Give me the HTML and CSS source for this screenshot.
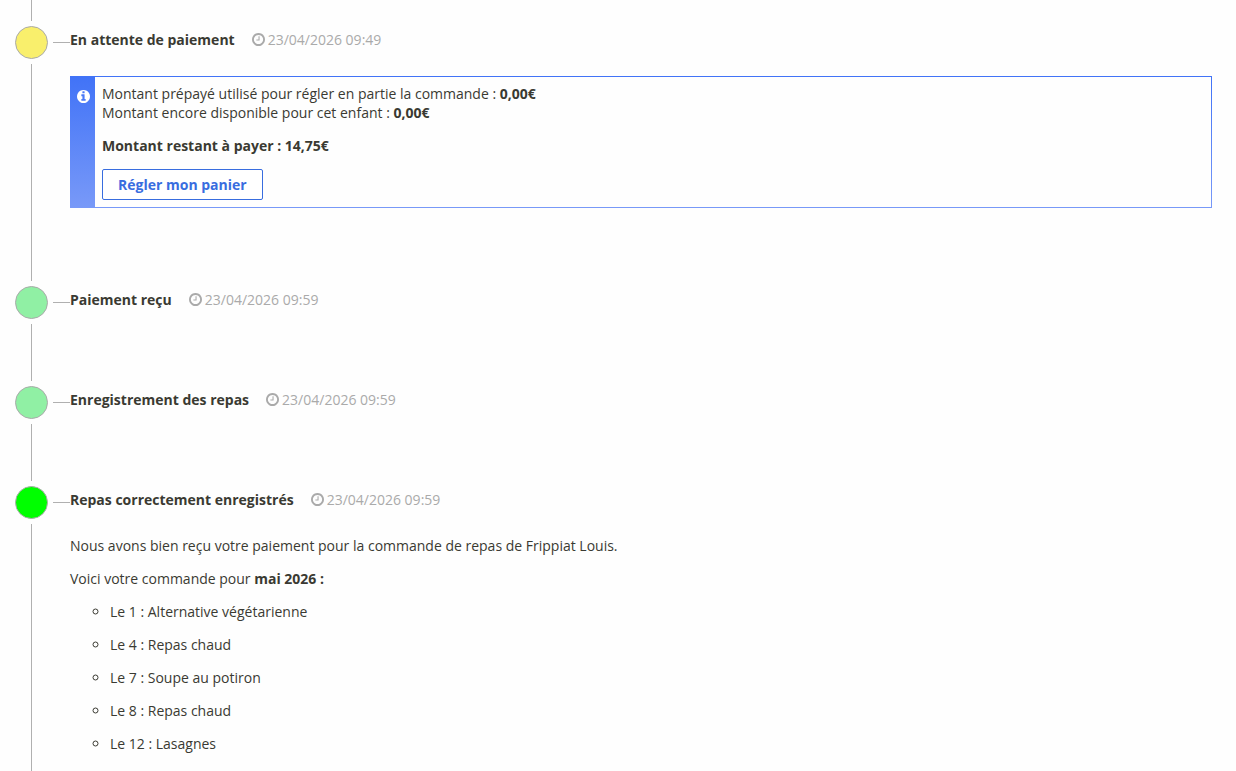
FILE: index.html
```html
<!DOCTYPE html>
<html lang="fr">
<head>
    <meta charset="UTF-8">
    <meta name="viewport" content="width=device-width, initial-scale=1.0">
    <title>Suivi de la commande</title>
    <link rel="stylesheet" href="styles.css">
</head>
<body>
    <svg class="sprite" aria-hidden="true">
        <symbol id="clock" viewBox="0 128 1536 1536">
            <path d="M896 544v448q0 14-9 23t-23 9h-320q-14 0-23-9t-9-23v-64q0-14 9-23t23-9h224v-352q0-14 9-23t23-9h64q14 0 23 9t9 23zm416 352q0-148-73-273t-198-198-273-73-273 73-198 198-73 273 73 273 198 198 273 73 273-73 198-198 73-273zm224 0q0 209-103 385.5t-279.5 279.5-385.5 103-385.5-103-279.5-279.5-103-385.5 103-385.5 279.5-279.5 385.5-103 385.5 103 279.5 279.5 103 385.5z"/>
        </symbol>
        <symbol id="info" viewBox="0 128 1536 1536">
            <path d="M1024 1376v-160q0-14-9-23t-23-9h-96v-512q0-14-9-23t-23-9h-320q-14 0-23 9t-9 23v160q0 14 9 23t23 9h96v320h-96q-14 0-23 9t-9 23v160q0 14 9 23t23 9h448q14 0 23-9t9-23zm-128-896v-160q0-14-9-23t-23-9h-192q-14 0-23 9t-9 23v160q0 14 9 23t23 9h192q14 0 23-9t9-23zm640 416q0 209-103 385.5t-279.5 279.5-385.5 103-385.5-103-279.5-279.5-103-385.5 103-385.5 279.5-279.5 385.5-103 385.5 103 279.5 279.5 103 385.5z"/>
        </symbol>
    </svg>

    <main class="page">
        <div class="lead-line"></div>
        <ol class="timeline">
            <li class="step">
                <div class="rail"><span class="dot waiting"></span><span class="line"></span></div>
                <div class="dash"></div>
                <div class="step-body">
                    <div class="step-header">
                        <h2>En attente de paiement</h2>
                        <span class="date"><svg class="icon"><use href="#clock"/></svg><time>23/04/2026 09:49</time></span>
                    </div>
                    <div class="notice">
                        <div class="notice-icon"><svg class="icon"><use href="#info"/></svg></div>
                        <div class="notice-text">
                            <p>Montant prépayé utilisé pour régler en partie la commande : <strong>0,00€</strong><br>
                            Montant encore disponible pour cet enfant : <strong>0,00€</strong></p>
                            <p><strong>Montant restant à payer : 14,75€</strong></p>
                            <button type="button" class="btn">Régler mon panier</button>
                        </div>
                    </div>
                </div>
            </li>
            <li class="step">
                <div class="rail"><span class="dot done"></span><span class="line"></span></div>
                <div class="dash"></div>
                <div class="step-body">
                    <div class="step-header">
                        <h2>Paiement reçu</h2>
                        <span class="date"><svg class="icon"><use href="#clock"/></svg><time>23/04/2026 09:59</time></span>
                    </div>
                </div>
            </li>
            <li class="step">
                <div class="rail"><span class="dot done"></span><span class="line"></span></div>
                <div class="dash"></div>
                <div class="step-body">
                    <div class="step-header">
                        <h2>Enregistrement des repas</h2>
                        <span class="date"><svg class="icon"><use href="#clock"/></svg><time>23/04/2026 09:59</time></span>
                    </div>
                </div>
            </li>
            <li class="step last">
                <div class="rail"><span class="dot current"></span><span class="line"></span></div>
                <div class="dash"></div>
                <div class="step-body">
                    <div class="step-header">
                        <h2>Repas correctement enregistrés</h2>
                        <span class="date"><svg class="icon"><use href="#clock"/></svg><time>23/04/2026 09:59</time></span>
                    </div>
                    <p>Nous avons bien reçu votre paiement pour la commande de repas de Frippiat Louis.</p>
                    <p>Voici votre commande pour <strong>mai 2026 :</strong></p>
                    <ul class="meals">
                        <li>Le 1 : Alternative végétarienne</li>
                        <li>Le 4 : Repas chaud</li>
                        <li>Le 7 : Soupe au potiron</li>
                        <li>Le 8 : Repas chaud</li>
                        <li>Le 12 : Lasagnes</li>
                    </ul>
                </div>
            </li>
        </ol>
    </main>
</body>
</html>
```
FILE: styles.css
```css
body {
    margin: 0;
    font-family: "Open Sans", Arial, sans-serif;
    font-size: 14px;
    line-height: 19px;
    color: #3a3a32;
    background: #fefefe;
}

.sprite {
    display: none;
}

.page {
    display: flex;
    flex-direction: column;
    min-height: 100vh;
    padding: 0 24px 0 15px;
    box-sizing: border-box;
}

.lead-line {
    width: 33px;
    height: 21px;
    margin-bottom: 5px;
    background: linear-gradient(#b0b0b0, #b0b0b0) center / 1px 100% no-repeat;
}

.timeline {
    display: flex;
    flex-direction: column;
    flex: 1;
    list-style: none;
    margin: 0;
    padding: 0;
}

.step {
    display: flex;
}

.rail {
    display: flex;
    flex-direction: column;
    align-items: center;
    width: 33px;
}

.dot {
    width: 33px;
    height: 33px;
    box-sizing: border-box;
    border: 1px solid #aaa;
    border-radius: 50%;
}

.waiting {
    background: #f9ef6c;
}

.done {
    background: #90f0a4;
}

.current {
    background: #00ff00;
}

.line {
    flex: 1;
    width: 1px;
    margin: 5px 0;
    background: #b0b0b0;
}

.dash {
    width: 17px;
    height: 1px;
    margin: 16px 0 0 5px;
    background: #b0b0b0;
}

.step-body {
    flex: 1;
    padding: 4px 0 50px;
}

.step-header {
    display: flex;
    gap: 17px;
    margin-bottom: 27px;
}

h2 {
    margin: 0;
    font-size: 14px;
    font-weight: bold;
}

.date {
    display: flex;
    align-items: center;
    gap: 3px;
    color: #aaa;
}

.icon {
    display: block;
    width: 13px;
    height: 13px;
    fill: currentColor;
}

p {
    margin: 0 0 14px;
}

/* message box */
.notice {
    display: flex;
    margin-bottom: 28px;
    border: 1px solid;
    border-image: linear-gradient(#4173f7, #7899f8) 1;
}

.notice-icon {
    display: flex;
    justify-content: center;
    width: 24px;
    padding-top: 13px;
    box-sizing: border-box;
    color: #fff;
    background: linear-gradient(#4173f7, #7899f8);
}

.notice-text {
    padding: 7px;
}

.btn {
    display: block;
    height: 31px;
    padding: 0 15px;
    border: 1px solid #386ddf;
    border-radius: 2px;
    font: inherit;
    font-weight: bold;
    color: #386ddf;
    background: #fff;
    cursor: pointer;
}

.btn:hover {
    color: #fff;
    background: #386ddf;
}

.meals {
    margin: 0;
    padding-left: 40px;
    list-style: circle;
}

.meals li {
    margin-bottom: 14px;
}

.last {
    flex: 1;
}

.last .step-body {
    padding-bottom: 0;
}

.last .line {
    margin-bottom: 0;
}
```
